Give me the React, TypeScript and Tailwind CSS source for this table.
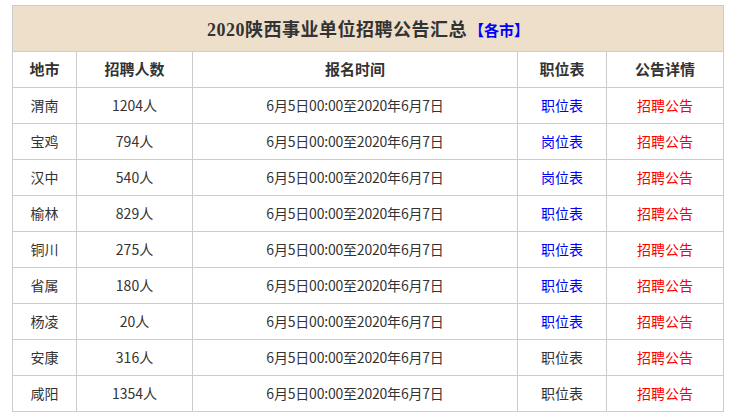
import React from "react";

const rows = [
  { city: "渭南", num: "1204人", pos: "职位表", posColor: "text-[#0000ff]" },
  { city: "宝鸡", num: "794人", pos: "岗位表", posColor: "text-[#0000ff]" },
  { city: "汉中", num: "540人", pos: "岗位表", posColor: "text-[#0000ff]" },
  { city: "榆林", num: "829人", pos: "职位表", posColor: "text-[#0000ff]" },
  { city: "铜川", num: "275人", pos: "职位表", posColor: "text-[#0000ff]" },
  { city: "省属", num: "180人", pos: "职位表", posColor: "text-[#0000ff]" },
  { city: "杨凌", num: "20人", pos: "职位表", posColor: "text-[#0000ff]" },
  { city: "安康", num: "316人", pos: "职位表", posColor: "text-[#333333]" },
  { city: "咸阳", num: "1354人", pos: "职位表", posColor: "text-[#333333]" },
];

const App = () => {
  return (
    <div className="w-[731px] h-[417px] bg-white pt-[5px] pl-[12px] font-['Noto_Sans_CJK_SC',sans-serif] text-[#333333]">
      <table className="w-[711px] border-collapse table-fixed">
        <colgroup>
          <col className="w-[64px]" />
          <col className="w-[116px]" />
          <col className="w-[325px]" />
          <col className="w-[89px]" />
          <col className="w-[117px]" />
        </colgroup>
        <thead>
          {/* title */}
          <tr className="h-[46px] bg-[#eedfcb]">
            <th
              colSpan={5}
              className="border border-[#cccccc] text-center font-bold text-[18px] tracking-[0.5px] leading-none"
            >
              <span className="font-['Liberation_Serif','Noto_Sans_CJK_SC',serif]">2020</span>
              陕西事业单位招聘公告汇总
              <span className="text-[#0000ff] text-[15px] ml-[2px] tracking-normal">【各市】</span>
            </th>
          </tr>
          <tr className="h-[36px] text-[15px]">
            <th className="border border-[#cccccc] font-bold">地市</th>
            <th className="border border-[#cccccc] font-bold">招聘人数</th>
            <th className="border border-[#cccccc] font-bold">报名时间</th>
            <th className="border border-[#cccccc] font-bold">职位表</th>
            <th className="border border-[#cccccc] font-bold">公告详情</th>
          </tr>
        </thead>
        <tbody className="text-[14px]">
          {rows.map((r) => (
            <tr key={r.city} className="h-[36px] text-center">
              <td className="border border-[#cccccc]">{r.city}</td>
              <td className="border border-[#cccccc]">{r.num}</td>
              <td className="border border-[#cccccc] tracking-[-0.2px]">6月5日00:00至2020年6月7日</td>
              <td className={`border border-[#cccccc] ${r.posColor}`}>{r.pos}</td>
              <td className="border border-[#cccccc] text-[#ff0000]">招聘公告</td>
            </tr>
          ))}
        </tbody>
      </table>
    </div>
  );
};

export default App;
